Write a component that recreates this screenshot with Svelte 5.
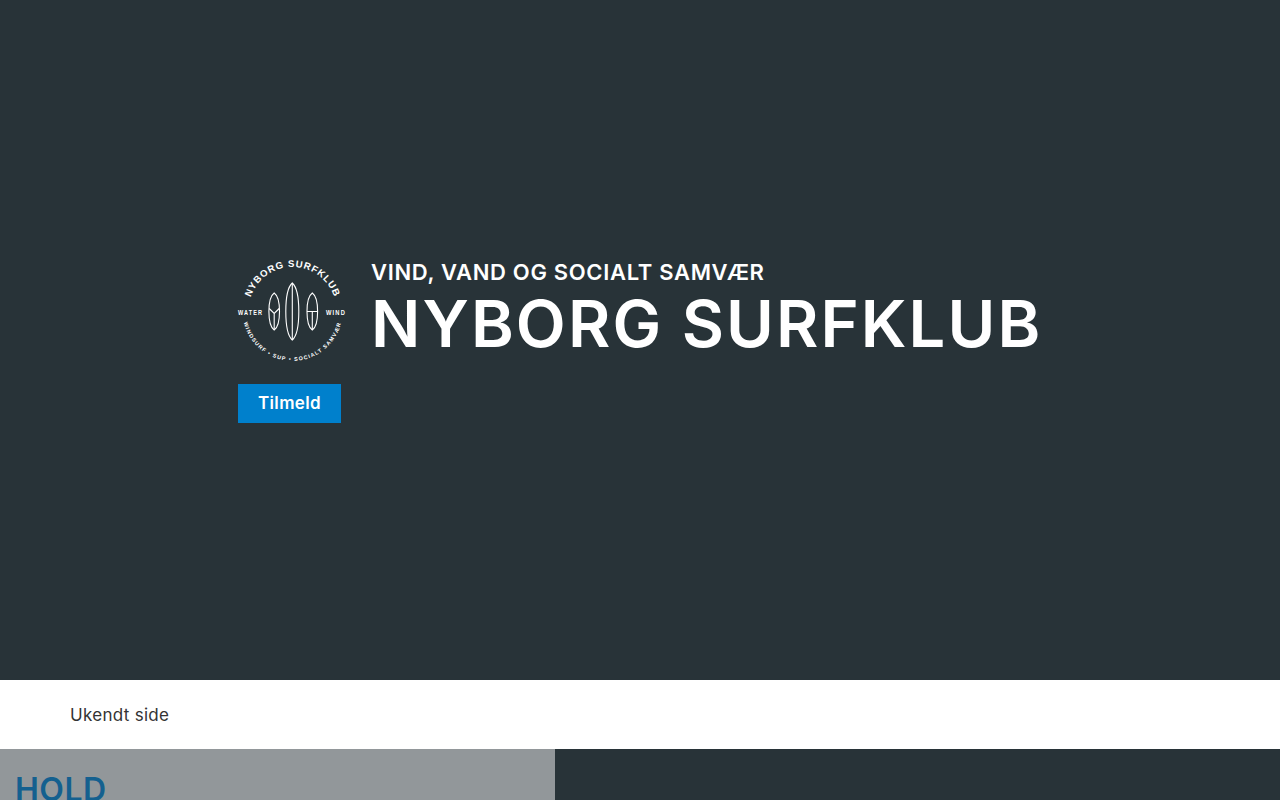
<script>
  const boardPath = (cx, top, bottom, half) => {
    const mid = (top + bottom) / 2;
    const span = (bottom - top) / 2;
    const k = span * 0.5;
    return `M${cx} ${top}C${cx + half * 0.6} ${top + span * 0.12} ${cx + half} ${mid - k} ${cx + half} ${mid}C${cx + half} ${mid + k} ${cx + half * 0.6} ${bottom - span * 0.12} ${cx} ${bottom}C${cx - half * 0.6} ${bottom - span * 0.12} ${cx - half} ${mid + k} ${cx - half} ${mid}C${cx - half} ${mid - k} ${cx - half * 0.6} ${top + span * 0.12} ${cx} ${top}Z`;
  };
</script>

<main class="page">
  <section class="hero">
    <div class="brand">
      <svg class="logo" viewBox="0 0 109 108" aria-label="Nyborg Surfklub logo">
        <defs>
          <path id="arc-top" d="M10.5 53A44 44 0 0 1 98.5 53" />
          <path id="arc-bottom" d="M4.5 53A50 50 0 0 0 104.5 53" />
        </defs>
        <text class="ring-top" text-anchor="middle"><textPath href="#arc-top" startOffset="50%">NYBORG SURFKLUB</textPath></text>
        <text class="ring-bottom" text-anchor="middle"><textPath href="#arc-bottom" startOffset="50%">WINDSURF • SUP • SOCIALT SAMVÆR</textPath></text>
        <text class="side" x="0" y="57" textLength="25" lengthAdjust="spacingAndGlyphs">WATER</text>
        <text class="side" x="88" y="57" textLength="20" lengthAdjust="spacingAndGlyphs">WIND</text>
        <g class="boards">
          <path d={boardPath(36.2, 35, 72, 5.3)} />
          <path d="M31.2 50.5L36.2 55.5L41.2 50.5M36.2 55.5V72" />
          <path d={boardPath(54.3, 25, 82, 6.5)} />
          <path d="M54.3 25V82" />
          <path d={boardPath(74.3, 35, 72, 5.3)} />
          <path d="M69 53.5H79.6M74.3 53.5V72" />
        </g>
      </svg>
      <div class="titles">
        <h2>VIND, VAND OG SOCIALT SAMVÆR</h2>
        <h1>NYBORG SURFKLUB</h1>
      </div>
    </div>
    <button class="cta">Tilmeld</button>
  </section>

  <section class="notice">Ukendt side</section>

  <section class="lower">
    <div class="teams"><h3>HOLD</h3></div>
    <div class="rest"></div>
  </section>
</main>

<style>
  :global(body) {
    margin: 0;
    overflow: hidden;
    font-family: Inter, "Open Sans", "Liberation Sans", sans-serif;
  }
  .page { display: flex; flex-direction: column; }
  .hero {
    height: 680px;
    box-sizing: border-box;
    background: #283338;
    padding-left: 238px;
    display: flex;
    flex-direction: column;
    justify-content: center;
    align-items: flex-start;
    gap: 18px;
    color: #fff;
  }
  .brand { display: flex; align-items: flex-start; gap: 24px; }
  .logo { width: 109px; height: 108px; display: block; overflow: visible; }
  .logo text { fill: #fff; font-family: "Liberation Sans", sans-serif; }
  .ring-top { font-size: 9.6px; font-weight: 700; letter-spacing: 0.85px; }
  .ring-bottom { font-size: 5.4px; font-weight: 700; letter-spacing: 1.1px; }
  .side { font-size: 8px; font-weight: 700; letter-spacing: 1.6px; }
  .boards path { fill: none; stroke: #fff; stroke-width: 1.1; }
  .titles { display: flex; flex-direction: column; }
  h2 { margin: 0; font-size: 22px; line-height: 28px; font-weight: 600; letter-spacing: 0.68px; }
  h1 { margin: 0; font-size: 65px; line-height: 76px; font-weight: 600; letter-spacing: 2.1px; }
  .cta {
    width: 103px;
    height: 39px;
    border: 0;
    padding: 0;
    background: #0080cc;
    color: #fff;
    font: 600 17px Inter, sans-serif;
    letter-spacing: 0.35px;
  }
  .notice {
    height: 69px;
    box-sizing: border-box;
    padding-left: 70px;
    display: flex;
    align-items: center;
    background: #fff;
    color: #333;
    font-size: 17px;
    letter-spacing: 0.3px;
  }
  .lower { display: flex; height: 120px; background: #283338; }
  .teams { width: 555px; box-sizing: border-box; padding: 22px 15px; background: #92979a; }
  .rest { flex: 1; }
  h3 { margin: 0; color: #14608f; font-size: 32px; line-height: 38px; font-weight: 600; letter-spacing: 0.5px; }
</style>
